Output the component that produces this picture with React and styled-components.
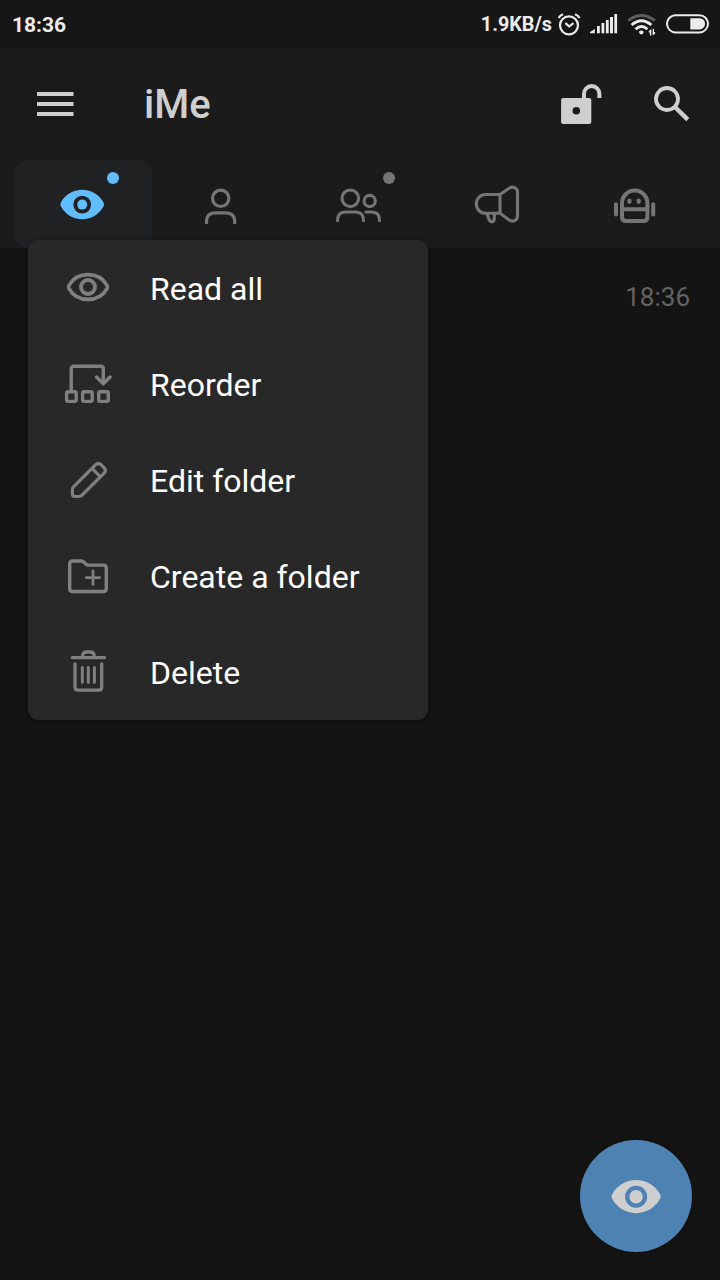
import React, { useState } from "react";
import styled, { createGlobalStyle } from "styled-components";

const GlobalStyle = createGlobalStyle`
  * {
    box-sizing: border-box;
  }
  body {
    margin: 0;
    background-color: #141414;
    font-family: Roboto, "Liberation Sans", sans-serif;
  }
  svg {
    display: block;
    flex: none;
  }
`;

const Screen = styled.div`
  position: relative;
  width: 720px;
  height: 1280px;
  overflow: hidden;
  background-color: #141414;
`;

const StatusBar = styled.div`
  display: flex;
  align-items: center;
  justify-content: space-between;
  height: 48px;
  padding: 0 11px 0 12px;
  background-color: #161616;
  color: #ececec;
`;

const StatusText = styled.span`
  font-size: ${(props) => props.$size || "21px"};
  font-weight: 700;
  line-height: 48px;
  padding-top: 1px;
`;

const StatusIcons = styled.div`
  display: flex;
  align-items: center;
`;

const IconGap = styled.span`
  width: ${(props) => props.$width};
`;

const Header = styled.header`
  height: 200px;
  background-color: #1b1b1b;
`;

const Toolbar = styled.div`
  display: flex;
  align-items: center;
  height: 112px;
  padding: 0 24px 0 31px;
  color: #cfcfcf;
`;

const IconButton = styled.button`
  display: flex;
  padding: 0;
  border: none;
  background: none;
  color: inherit;
  cursor: pointer;
  margin-left: ${(props) => props.$left || "0"};
`;

const Title = styled.h1`
  flex: 1;
  margin: 0 0 0 65px;
  padding-top: 1px;
  font-size: 40px;
  font-weight: 500;
  line-height: 48px;
`;

const Tabs = styled.nav`
  display: flex;
  padding: 0 14px;
`;

const Tab = styled.button`
  position: relative;
  display: flex;
  align-items: center;
  justify-content: center;
  flex: none;
  width: 138px;
  height: 88px;
  padding: 0;
  border: none;
  border-radius: 14px;
  cursor: pointer;
  background-color: ${(props) => (props.$active ? "#202123" : "transparent")};
  color: ${(props) => (props.$active ? "#62bdfd" : "#757575")};
`;

const Badge = styled.span`
  position: absolute;
  top: 12px;
  right: 33px;
  width: 12px;
  height: 12px;
  border-radius: 50%;
  background-color: currentColor;
`;

const ChatTime = styled.div`
  padding: 33px 30px 0 0;
  font-size: 26px;
  line-height: 32px;
  text-align: right;
  color: #636363;
`;

const Menu = styled.ul`
  position: absolute;
  top: 240px;
  left: 28px;
  width: 400px;
  margin: 0;
  padding: 0;
  list-style: none;
  border-radius: 11px;
  background-color: #282828;
  box-shadow: 0 1px 5px rgba(0, 0, 0, 0.35);
`;

const MenuItem = styled.li`
  display: flex;
  align-items: center;
  gap: 38px;
  height: 96px;
  padding-left: 36px;
  color: #808080;
  cursor: pointer;
`;

const MenuLabel = styled.span`
  font-size: 32px;
  line-height: 40px;
  color: #fff;
  padding-top: 1px;
`;

const Fab = styled.button`
  position: absolute;
  right: 28px;
  bottom: 28px;
  display: flex;
  align-items: center;
  justify-content: center;
  width: 112px;
  height: 112px;
  padding: 0 0 0 2px;
  border: none;
  border-radius: 50%;
  background-color: #4e82b3;
  color: #cfcfcf;
  box-shadow: 0 1px 4px rgba(0, 0, 0, 0.2);
  cursor: pointer;
`;

const Icon = ({ width = 48, height = 48, stroke = 3.2, children }) => (
  <svg
    width={width}
    height={height}
    viewBox={`0 0 ${width} ${height}`}
    fill="none"
    stroke="currentColor"
    strokeWidth={stroke}
    strokeLinecap="round"
    strokeLinejoin="round"
  >
    {children}
  </svg>
);

const AlarmIcon = () => (
  <Icon width={26} height={24} stroke={2.2}>
    <circle cx="13" cy="13.3" r="9" />
    <path d="M10 11.6l3.2 2.9 3.6-2.9" />
    <path d="M2.6 6Q4 3.4 7 2.2M19 2.2Q22.2 3.4 23.6 6" strokeLinecap="butt" />
  </Icon>
);

const SignalIcon = () => (
  <Icon width={28} height={24} stroke={0}>
    <g fill="currentColor">
      <path d="M0 21.3v-1.4l4.8-3v4.4z" />
      <rect x="7" y="14" width="2.8" height="7.3" />
      <rect x="11.5" y="11" width="2.8" height="10.3" />
      <rect x="15.9" y="8" width="2.8" height="13.3" />
      <rect x="20" y="5" width="3" height="16.3" />
      <rect x="24.3" y="2" width="2.8" height="19.3" />
    </g>
  </Icon>
);

const WifiIcon = () => (
  <Icon width={30} height={24} stroke={2.9}>
    <g strokeLinecap="butt">
      <path d="M1.2 8.6Q14.5-1.4 27.8 8.6" stroke="#5c5c5c" />
      <path d="M4.6 13Q14.5 4.6 24.4 13" />
      <path d="M8.6 17.2Q14.5 11.8 20.4 17.2" />
    </g>
    <path d="M11.9 19.8Q14.3 17.4 16.7 19.8 16.4 22.3 14.3 22.5 12.2 22.3 11.9 19.8z" fill="currentColor" stroke="none" />
    <path d="M23.6 23v-4.8l-1.3 1.7M26.3 17.5v4.9l1.3-1.7" strokeWidth="1.4" />
  </Icon>
);

const BatteryIcon = () => (
  <Icon width={43} height={24} stroke={2}>
    <rect x="1" y="3.2" width="41" height="17.2" rx="8.6" />
    <path d="M24.3 6.2h9.2a5.5 5.5 0 0 1 0 11.2h-9.2z" fill="currentColor" stroke="none" />
  </Icon>
);

const HamburgerIcon = () => (
  <Icon stroke={4}>
    <path d="M6 14h36.5M6 24h36.5M6 34h36.5" strokeLinecap="butt" />
  </Icon>
);

const UnlockIcon = () => (
  <Icon stroke={4}>
    <path
      fillRule="evenodd"
      fill="currentColor"
      stroke="none"
      d="M7.1 18h26.2a2 2 0 0 1 2 2v22a2 2 0 0 1-2 2H7.1a2 2 0 0 1-2-2V20a2 2 0 0 1 2-2zM20.3 27a3.8 3.8 0 1 0 0 7.6 3.8 3.8 0 0 0 0-7.6z"
    />
    <path d="M28 19v-5.2a7.7 7.7 0 0 1 15.4 0v4.2" strokeLinecap="butt" />
  </Icon>
);

const SearchIcon = () => (
  <Icon stroke={3.8}>
    <circle cx="19" cy="19" r="11" />
    <path d="M27.2 27.2L39.8 39.6" strokeWidth="4.4" strokeLinecap="butt" />
  </Icon>
);

const FilledEyeIcon = ({ size = 48, ring = 8.9, pupil = 5 }) => (
  <svg width={size} height={size} viewBox="0 0 48 48">
    <path
      fill="currentColor"
      fillRule="evenodd"
      d={`M1.8 22.7C6 14.8 14 9.8 23.2 9.8s17.2 5 21.4 12.9q.8 1.8 0 3.6c-4.2 7.9-12.2 13-21.4 13s-17.2-5.1-21.4-13q-.8-1.8 0-3.6zM23.2 ${24.6 - ring}a${ring} ${ring} 0 1 0 0 ${ring * 2} ${ring} ${ring} 0 0 0 0-${ring * 2}z`}
    />
    <circle cx="23.2" cy="24.6" r={pupil} fill="currentColor" />
  </svg>
);

const PersonIcon = () => (
  <Icon stroke={3.2}>
    <circle cx="23.7" cy="18.3" r="8.2" />
    <path d="M9.5 44v-2.2q0-9 9-9h10.2q9 0 9 9V44" strokeLinecap="butt" />
  </Icon>
);

const PeopleIcon = () => (
  <Icon stroke={3.1}>
    <circle cx="15.3" cy="18.3" r="8.3" />
    <circle cx="34.7" cy="21" r="5.6" />
    <path d="M2.5 40.6q0-8.6 8-8.6h10.1q8 0 8 8.6M31 32h5.6q8 0 8 8.6" />
  </Icon>
);

const MegaphoneIcon = () => (
  <Icon stroke={3.1}>
    <path d="M27 14.5H12.7a9.4 9.4 0 0 0 0 18.8H27zL36.2 8.2Q38.8 6.4 41.6 7.6 44.5 8.8 44.5 12v24q0 3.2-2.9 4.6-2.8 1.2-5.4-.6L27 33.3" />
    <path d="M14 34l2 5.4q.9 2.4 3 2.4 2.3-.2 2.3-3.6V34" />
  </Icon>
);

const RobotIcon = () => (
  <Icon stroke={4}>
    <path d="M11 23.2a12.7 12.7 0 0 1 25.4 0V37q0 4-4 4H15q-4 0-4-4zM11 29.3h25.4" />
    <path d="M5 24.2v10.4M42.2 24.2v10.4" />
    <path d="M18.4 20.6v1.2M27.7 20.6v1.2" strokeWidth="4.2" />
  </Icon>
);

const EyeIcon = () => (
  <Icon stroke={3.7}>
    <path d="M5 21.4C8.8 14.6 15.8 10.6 24 10.6s15.2 4 19 10.8q.8 1.6 0 3.2c-3.8 6.8-10.8 10.8-19 10.8S8.8 31.4 5 24.6q-.8-1.6 0-3.2z" />
    <circle cx="24" cy="23" r="7" strokeWidth="3.8" />
  </Icon>
);

const ReorderIcon = () => (
  <Icon stroke={3.4}>
    <path d="M7.2 31V9q0-2.7 2.7-2.7h26.7q2.7 0 2.7 2.7v14.4M32.5 17l6.8 6.8 6.8-6.8" />
    <rect x="2.6" y="31.8" width="9.6" height="9.6" rx="1.6" />
    <rect x="18.6" y="31.8" width="9.6" height="9.6" rx="1.6" />
    <rect x="34.7" y="31.8" width="9.6" height="9.6" rx="1.6" />
  </Icon>
);

const PencilIcon = () => (
  <Icon stroke={3.2}>
    <path d="M8.4 38v-4.5q0-1.5 1.1-2.6L31.7 8.7Q34.3 6.2 37 8.7l3.2 3.2q2.5 2.6 0 5.2L18 39.2q-1.3 1.3-3.4 1.3h-3.8Q8.4 40.5 8.4 38zM28 12.4l8.2 8.2" />
  </Icon>
);

const FolderPlusIcon = () => (
  <Icon stroke={3.4}>
    <path d="M5.7 12q0-3 3-3h8.2q1.6 0 2.7 1l2.4 2.1q1.1 1 2.7 1h14.6q3 0 3 3v20.4q0 3-3 3H8.7q-3 0-3-3z" />
    <path d="M29 18.8v13.6M22.2 25.6h13.6" strokeWidth="2.8" />
  </Icon>
);

const TrashIcon = () => (
  <Icon stroke={3.3}>
    <path d="M8.3 9.6h32.2M18.6 9v-1q0-4 4-4h3.6q4 0 4 4v1" />
    <path d="M11 16v23.2q0 3 3 3h20.7q3 0 3-3V16" />
    <path d="M18.3 19.4v14.8M24.3 19.4v14.8M30.4 19.4v14.8" strokeWidth="3" />
  </Icon>
);

const tabs = [
  { id: "unread", icon: <FilledEyeIcon />, badge: true },
  { id: "personal", icon: <PersonIcon /> },
  { id: "groups", icon: <PeopleIcon />, badge: true },
  { id: "channels", icon: <MegaphoneIcon /> },
  { id: "bots", icon: <RobotIcon /> },
];

const menuItems = [
  { label: "Read all", icon: <EyeIcon /> },
  { label: "Reorder", icon: <ReorderIcon /> },
  { label: "Edit folder", icon: <PencilIcon /> },
  { label: "Create a folder", icon: <FolderPlusIcon /> },
  { label: "Delete", icon: <TrashIcon /> },
];

const App = () => {
  const [activeTab, setActiveTab] = useState("unread");

  return (
    <Screen>
      <GlobalStyle />
      <StatusBar>
        <StatusText>18:36</StatusText>
        <StatusIcons>
          <StatusText $size="19.8px">1.9KB/s</StatusText>
          <IconGap $width="4px" />
          <AlarmIcon />
          <IconGap $width="8px" />
          <SignalIcon />
          <IconGap $width="9px" />
          <WifiIcon />
          <IconGap $width="9px" />
          <BatteryIcon />
        </StatusIcons>
      </StatusBar>
      <Header>
        <Toolbar>
          <IconButton>
            <HamburgerIcon />
          </IconButton>
          <Title>iMe</Title>
          <IconButton>
            <UnlockIcon />
          </IconButton>
          <IconButton $left="44px">
            <SearchIcon />
          </IconButton>
        </Toolbar>
        <Tabs>
          {tabs.map((tab) => (
            <Tab
              key={tab.id}
              $active={tab.id === activeTab}
              onClick={() => setActiveTab(tab.id)}
            >
              {tab.icon}
              {tab.badge && <Badge />}
            </Tab>
          ))}
        </Tabs>
      </Header>
      <ChatTime>18:36</ChatTime>
      <Menu>
        {menuItems.map((item) => (
          <MenuItem key={item.label}>
            {item.icon}
            <MenuLabel>{item.label}</MenuLabel>
          </MenuItem>
        ))}
      </Menu>
      <Fab>
        <FilledEyeIcon size={54} ring={9.8} pupil={6} />
      </Fab>
    </Screen>
  );
};

export default App;
